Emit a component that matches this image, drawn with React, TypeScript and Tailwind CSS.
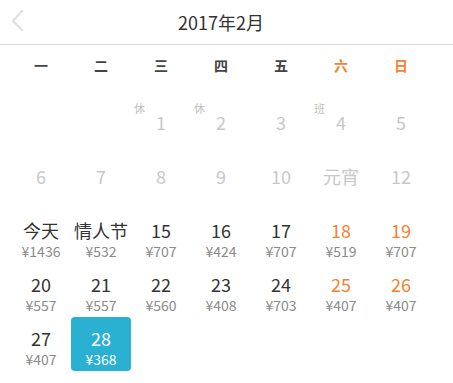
import React from "react";

type Day = {
  label: string;
  price?: string;
  mark?: string;
  past?: boolean;
  weekend?: boolean;
  selected?: boolean;
};

const WEEK = ["一", "二", "三", "四", "五", "六", "日"];

const ROWS: (Day | null)[][] = [
  [null, null, { label: "1", mark: "休", past: true }, { label: "2", mark: "休", past: true }, { label: "3", past: true }, { label: "4", mark: "班", past: true }, { label: "5", past: true }],
  [
    { label: "6", past: true },
    { label: "7", past: true },
    { label: "8", past: true },
    { label: "9", past: true },
    { label: "10", past: true },
    { label: "元宵", past: true },
    { label: "12", past: true },
  ],
  [
    { label: "今天", price: "1436" },
    { label: "情人节", price: "532" },
    { label: "15", price: "707" },
    { label: "16", price: "424" },
    { label: "17", price: "707" },
    { label: "18", price: "519", weekend: true },
    { label: "19", price: "707", weekend: true },
  ],
  [
    { label: "20", price: "557" },
    { label: "21", price: "557" },
    { label: "22", price: "560" },
    { label: "23", price: "408" },
    { label: "24", price: "703" },
    { label: "25", price: "407", weekend: true },
    { label: "26", price: "407", weekend: true },
  ],
  [{ label: "27", price: "407" }, { label: "28", price: "368", selected: true }, null, null, null, null, null],
];

function Cell({ day }: { day: Day | null }) {
  if (!day) return <div className="h-[54px]" />;
  const numColor = day.selected
    ? "text-white"
    : day.past
      ? "text-[#c8c8c8]"
      : day.weekend
        ? "text-[#f5822e]"
        : "text-[#333]";
  return (
    <div
      className={`flex h-[54px] flex-col items-center pt-[10px] ${day.selected ? "rounded-[4px] bg-[#2ab0d0]" : ""}`}
    >
      <div className={`relative whitespace-nowrap text-[18px] leading-[22px] ${numColor}`}>
        {day.label}
        {day.mark && (
          <span className="absolute -left-[22px] -top-[10px] text-[11px] leading-[14px] text-[#c0c0c0]">{day.mark}</span>
        )}
      </div>
      {day.price && (
        <div className={`whitespace-nowrap text-[14px] leading-[20px] ${day.selected ? "text-white" : "text-[#8a8a8a]"}`}>
          ¥{day.price}
        </div>
      )}
    </div>
  );
}

export default function App() {
  return (
    <div className="h-[383px] w-[453px] bg-white font-['Microsoft_YaHei','Noto_Sans_CJK_SC',sans-serif]">
      <div className="relative flex h-[45px] items-center justify-center border-b border-[#dcdcdc] pl-[11px] pr-[22px]">
        <svg className="absolute left-[10px] top-[9px] h-[22px] w-[14px]" viewBox="0 0 14 22" fill="none">
          <path d="M12 2 L3 12 L12 21" stroke="#dedede" strokeWidth={2} strokeLinecap="round" strokeLinejoin="round" />
        </svg>
        <span className="text-[18px] leading-[24px] text-[#333]">2017年2月</span>
      </div>
      <div className="pl-[11px] pr-[22px]">
        <div className="grid h-[41px] grid-cols-7 items-center">
          {WEEK.map((w, i) => (
            <div
              key={w}
              className={`text-center text-[14px] font-bold ${i >= 5 ? "text-[#f5822e]" : "text-[#444]"}`}
            >
              {w}
            </div>
          ))}
        </div>
        <div className="grid grid-cols-7 pt-[15px]">
          {ROWS.flat().map((d, i) => (
            <Cell key={i} day={d} />
          ))}
        </div>
      </div>
    </div>
  );
}
